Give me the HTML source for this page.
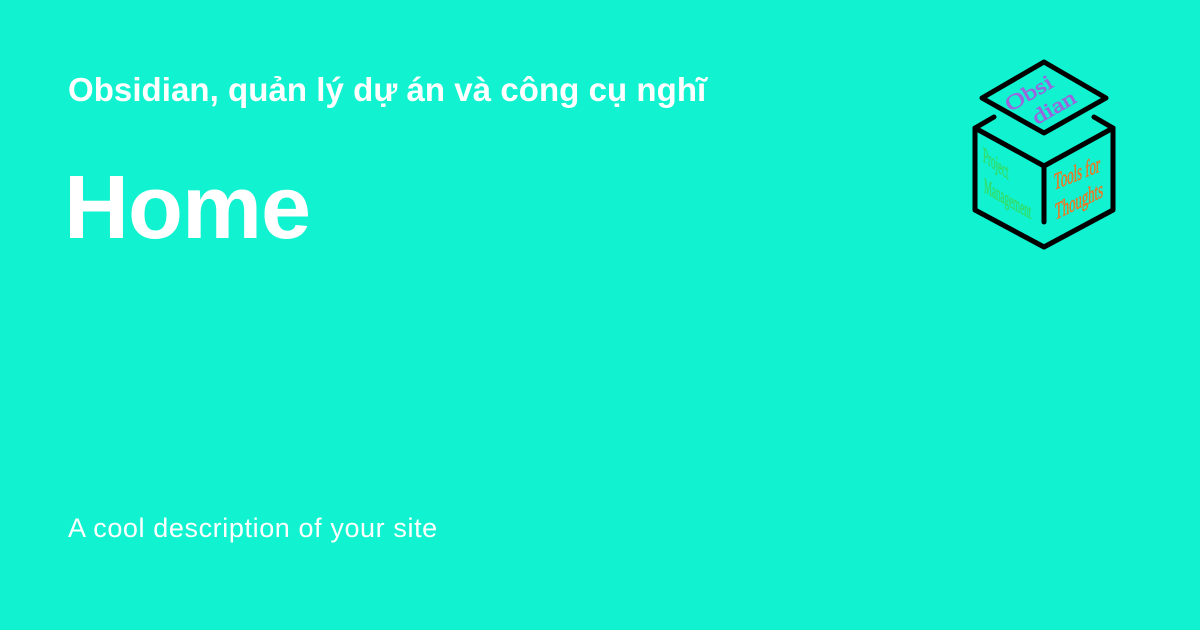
<!DOCTYPE html>
<html><head><meta charset="utf-8"><style>
body{margin:0;width:1200px;height:630px;background:#10F2D0;overflow:hidden;font-family:"Liberation Sans",sans-serif;color:#fff;position:relative}
.t{position:absolute;left:68px;top:71px;font-size:33px;font-weight:bold;letter-spacing:0.05px}
.h{position:absolute;left:64px;top:157px;font-size:90px;font-weight:bold;letter-spacing:-1px}
.d{position:absolute;left:68px;top:513px;font-size:27px;letter-spacing:0.6px}
svg{position:absolute;left:0;top:0}
</style></head><body>
<div class="t">Obsidian, quản lý dự án và công cụ nghĩ</div>
<div class="h">Home</div>
<div class="d">A cool description of your site</div>
<svg width="1200" height="630">
<g fill="none" stroke="#000" stroke-width="5" stroke-linejoin="round" stroke-linecap="round">
<polygon points="1044,62 1106,98 1044,133 982,98"/>
<polyline points="994,117 975,128 1044,166 1113,128 1094,117"/>
<polyline points="975,128 975,210 1044,247 1113,210 1113,128"/>
<line x1="1044" y1="166" x2="1044" y2="222"/>
</g>
<g stroke-width="0.6">
<text transform="translate(1010,112) rotate(-30) scale(1.3,1)" font-family="Liberation Serif" font-size="21" fill="#9966dd" stroke="#9966dd">Obsi</text>
<text transform="translate(1037,125) rotate(-30) scale(1.3,1)" font-family="Liberation Serif" font-size="21" fill="#9966dd" stroke="#9966dd">dian</text>
<text transform="translate(983,161) skewY(36) scale(0.43,1)" font-family="Liberation Serif" font-size="21" fill="#33dd66" stroke="#33dd66">Project</text>
<text transform="translate(984,192) skewY(30) scale(0.43,1)" font-family="Liberation Serif" font-size="21" fill="#33dd66" stroke="#33dd66">Management</text>
<text transform="translate(1054,190) skewY(-22) scale(0.53,1)" font-family="Liberation Serif" font-size="24" fill="#ee7722" stroke="#ee7722">Tools for</text>
<text transform="translate(1055,220) skewY(-26) scale(0.53,1)" font-family="Liberation Serif" font-size="24" fill="#ee7722" stroke="#ee7722">Thoughts</text>
</g>
</svg>
</body></html>
